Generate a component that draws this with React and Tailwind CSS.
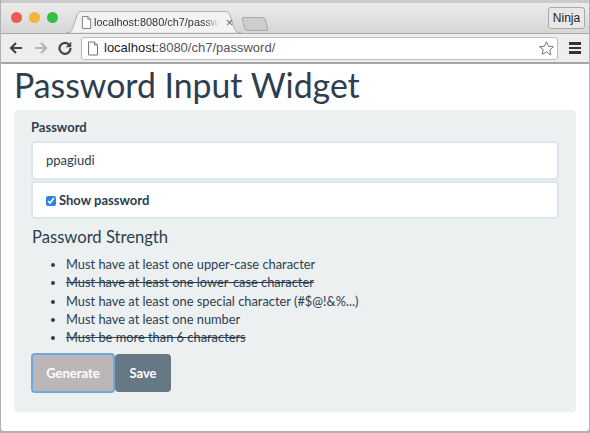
import React from "react";

const strength = [
  ["Must have at least one upper-case character", false],
  ["Must have at least one lower-case character", true],
  ["Must have at least one special character (#$@!&%...)", false],
  ["Must have at least one number", false],
  ["Must be more than 6 characters", true],
];

function PageIcon({ className }) {
  return (
    <svg className={className} viewBox="0 0 12 14" fill="none" stroke="#777" strokeWidth="1">
      <path d="M1.5 .5h6l3 3v10h-9z" fill="#fff" />
      <path d="M7.5 .5v3h3" />
    </svg>
  );
}

export default function App() {
  return (
    <div className="w-[590px] h-[433px] overflow-hidden bg-[#b0b1b1] pl-px pr-px pb-[2px] flex flex-col font-['Lato','Liberation_Sans',sans-serif]">
      <div className="h-[33px] shrink-0 bg-gradient-to-b from-[#ececec] to-[#d6d6d6] border-t-[3px] border-[#cbcbcb] flex items-end relative">
        <div className="flex gap-[7px] self-start mt-[9px] ml-[10px]">
          <span className="w-[11px] h-[11px] rounded-full bg-[#ee5a52]"></span>
          <span className="w-[11px] h-[11px] rounded-full bg-[#f5b43c]"></span>
          <span className="w-[11px] h-[11px] rounded-full bg-[#35c043]"></span>
        </div>
        <div className="relative ml-[8px] w-[175px] h-[22px] flex items-center pl-[15px] font-['Liberation_Sans',sans-serif] text-[10.9px] text-[#333]">
          <svg className="absolute left-0 top-0 w-[175px] h-[22px]" viewBox="0 0 175 22" fill="none">
            <path d="M0 21.5h2c3 0 4-2 5-5l4-12c1-3 2-4 5-4h143c3 0 4 1 5 4l4 12c1 3 2 5 5 5h2" fill="#f3f3f3" stroke="#b0b0b0" />
          </svg>
          <PageIcon className="relative w-[11px] h-[13px] shrink-0" />
          <span className="relative ml-[2px] shrink-0 whitespace-nowrap [mask-image:linear-gradient(to_right,black_88%,transparent)]">localhost:8080/ch7/passw</span>
          <span className="relative ml-[7px] text-[13px] text-[#666] leading-none">×</span>
        </div>
        <div className="ml-[2px] mb-[2px] w-[24px] h-[14px] bg-[#cdcdcd] border border-[#a9a9a9] rounded-[3px] skew-x-[15deg]"></div>
        <div className="ml-auto mr-[4px] self-start mt-[4px] w-[37px] h-[22px] border border-[#a9a9a9] rounded-[3px] bg-[#e8e8e8] flex items-center justify-center font-['Liberation_Sans',sans-serif] text-[12px] text-[#222]">
          Ninja
        </div>
      </div>
      <div className="h-[31px] shrink-0 bg-[#ededed] border-t border-b-2 border-t-[#a8a8a8] border-b-[#a5a5a5] flex items-center">
        <svg className="ml-[8px] w-[14px] h-[14px]" viewBox="0 0 14 14" fill="none" stroke="#444" strokeWidth="2.2">
          <path d="M13 7H2M7 2L2 7l5 5" />
        </svg>
        <svg className="ml-[11px] w-[14px] h-[14px]" viewBox="0 0 14 14" fill="none" stroke="#b5b5b5" strokeWidth="2.2">
          <path d="M1 7h11M7 2l5 5-5 5" />
        </svg>
        <svg className="ml-[10px] w-[14px] h-[14px]" viewBox="0 0 14 14" fill="none" stroke="#444" strokeWidth="2.2">
          <path d="M11.5 4.2A5.5 5.5 0 1 0 12.5 7" />
          <path d="M13 1v5H8" fill="#444" strokeWidth="0.5" />
        </svg>
        <div className="ml-[9px] w-[477px] h-[23px] bg-white border border-[#bdbdbd] rounded-[3px] flex items-center pl-[5px] pr-[2px] font-['Liberation_Sans',sans-serif] text-[13px]">
          <PageIcon className="w-[12px] h-[15px] shrink-0" />
          <span className="ml-[5px] text-[#222]">localhost:</span>
          <span className="text-[#555]">8080/ch7/password/</span>
          <svg className="ml-auto w-[17px] h-[17px]" viewBox="0 0 24 24" fill="none" stroke="#777" strokeWidth="1.4">
            <path d="M12 2.5l2.9 6.3 6.9.8-5.1 4.7 1.4 6.8L12 16.7 5.9 20.1l1.4-6.8L2.2 9.6l6.9-.8z" />
          </svg>
        </div>
        <div className="ml-[11px] w-[12px] flex flex-col gap-[2px]">
          <span className="h-[2.5px] bg-[#333]"></span>
          <span className="h-[2.5px] bg-[#333]"></span>
          <span className="h-[2.5px] bg-[#333]"></span>
        </div>
      </div>
      <div className="flex-1 min-h-0 bg-white rounded-b-[3px] pl-[13px] pr-[13px] text-[#2c3e50] flex flex-col">
        <h1 className="text-[33.8px] leading-[40px] mt-[1px] h-[45px] whitespace-nowrap text-[#2c3e50]">Password Input Widget</h1>
        <div className="bg-[#ecf0f1] rounded-[4px] h-[302px] pt-[10px] px-[17px]">
          <div className="text-[13px] font-bold leading-[14px] text-[#2c3e50]">Password</div>
          <div className="mt-[7px] h-[39px] bg-white border-2 border-[#dce4ec] rounded-[4px] flex items-center px-[13px] pt-px text-[13px] text-[#2c3e50]">
            ppagiudi
          </div>
          <div className="mt-px h-[38px] bg-white border-2 border-[#dce4ec] rounded-[4px] flex items-center px-[13px] pt-px text-[13px] font-bold text-[#2c3e50]">
            <input type="checkbox" readOnly checked className="w-[10px] h-[10px] accent-[#2e84e0] m-0" />
            <span className="ml-[3px]">Show password</span>
          </div>
          <div className="mt-[7px] pl-px text-[16.6px] leading-[22px] text-[#2c3e50]">Password Strength</div>
          <ul className="mt-[7px] ml-[35px] list-disc text-[12.85px] leading-[18.25px] text-[#2c3e50]">
            {strength.map(([t, done]) => (
              <li key={t} className={done ? "line-through" : ""}>{t}</li>
            ))}
          </ul>
          <div className="mt-[7px] flex">
            <button className="w-[84px] h-[40px] bg-[#bdb6b8] border-2 border-[#6ea8e0] rounded-[4px] text-white text-[13px] font-bold">Generate</button>
            <button className="w-[56px] h-[38px] mt-px bg-[#677885] rounded-[4px] text-white text-[13px] font-bold">Save</button>
          </div>
        </div>
      </div>
    </div>
  );
}
